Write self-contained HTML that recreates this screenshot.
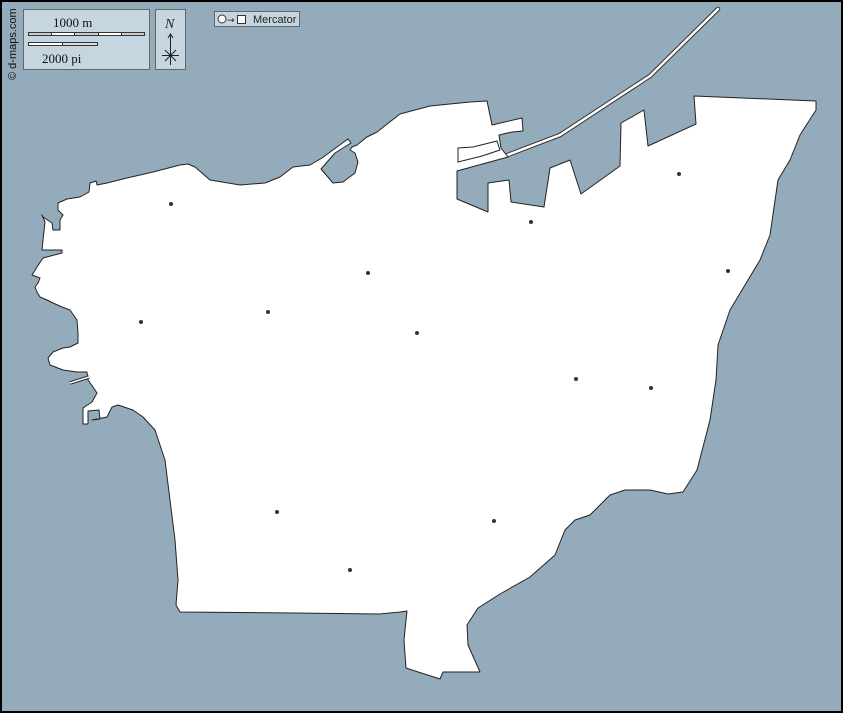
<!DOCTYPE html>
<html><head><meta charset="utf-8"><style>
html,body{margin:0;padding:0;background:#93abbb;}
svg{display:block}
</style></head><body>
<svg width="843" height="713" viewBox="0 0 843 713" xmlns="http://www.w3.org/2000/svg">
<rect x="0" y="0" width="843" height="713" fill="#93abbb"/>
<polyline points="505,156 560,135 650,76 718,9" fill="none" stroke="#333" stroke-width="4.5" stroke-linecap="round" stroke-linejoin="round"/>
<polyline points="505,156 560,135 650,76 718,9" fill="none" stroke="#fff" stroke-width="2.5" stroke-linecap="round" stroke-linejoin="round"/>
<path fill="#fff" stroke="#222" stroke-width="1" stroke-linejoin="round" d="
M188,164 L180,165 L153,172 L127,178 L107,183 L97,185 L96,181 L90,183 L89,192 L80,197 L67,199 L58,203 L58,210 L63,215 L60,220 L60,230 L53,230 L52,223 L43,217 L42,215 L45,222 L43,240 L42,250 L62,250 L62,253 L43,258 L37,267 L32,275 L40,278 L38,283 L35,287 L37,292 L40,297 L47,300 L53,303 L62,307 L70,310 L77,320 L78,333 L78,343 L70,347 L63,348 L53,352 L48,358 L50,365 L63,370 L77,372 L87,372 L88,380 L93,387 L97,393 L92,402 L83,408 L83,424 L88,424 L88,411 L99,410 L100,419 L92,420 L107,417 L112,407 L118,405 L133,410 L143,417 L155,430 L165,460 L170,500 L175,540 L178,580 L176,605 L180,612 L295,613 L380,614 L400,612 L407,611 L404,640 L406,668 L412,670 L440,679 L443,672 L480,672 L468,645 L467,625 L478,608 L500,594 L530,577 L555,555 L565,530 L575,520 L590,515 L610,495 L625,490 L650,490 L668,494 L683,492 L697,470 L710,420 L716,380 L718,345 L730,310 L745,285 L760,260 L770,235 L778,180 L790,160 L800,135 L816,110 L816,101 L694,96 L696,124 L648,146 L644,110 L621,123 L620,166 L581,194 L570,160 L550,168 L544,207 L511,202 L509,180 L488,183 L488,212 L457,199 L457,171 L508,157 L501,148 L499,135 L512,132 L523,131 L522,118 L492,125 L487,101 L470,102 L430,106 L400,114 L377,132 L367,137 L357,145 L352,147 L350,150 L355,153 L358,162 L355,173 L343,182 L333,183 L321,169 L335,153 L343,148 L351,143 L348,139 L337,147 L322,158 L310,165 L293,167 L280,177 L265,183 L240,185 L210,180 L195,167 Z"/>
<path fill="#fff" stroke="#222" stroke-width="1" d="M458,148 L473,147 L497,141 L500,150 L482,156 L458,162 Z"/>
<polyline points="70,383 89,377" fill="none" stroke="#222" stroke-width="3.5"/>
<polyline points="70,383 89,377" fill="none" stroke="#fff" stroke-width="1.5"/>
<g fill="#333">
<circle cx="171" cy="204" r="2"/><circle cx="368" cy="273" r="2"/><circle cx="531" cy="222" r="2"/><circle cx="679" cy="174" r="2"/><circle cx="728" cy="271" r="2"/><circle cx="141" cy="322" r="2"/><circle cx="268" cy="312" r="2"/><circle cx="417" cy="333" r="2"/><circle cx="576" cy="379" r="2"/><circle cx="651" cy="388" r="2"/><circle cx="277" cy="512" r="2"/><circle cx="494" cy="521" r="2"/><circle cx="350" cy="570" r="2"/>
</g>
<rect x="23.5" y="9.5" width="126" height="60" fill="#c6d6e0" stroke="#666"/>
<text x="53" y="27" font-family="Liberation Serif,serif" font-size="13" fill="#111">1000 m</text>
<rect x="28.5" y="32.5" width="116" height="3" fill="#fff" stroke="#333"/>
<g stroke="#333" stroke-width="1"><line x1="51.5" y1="32" x2="51.5" y2="36"/><line x1="74.5" y1="32" x2="74.5" y2="36"/><line x1="98.5" y1="32" x2="98.5" y2="36"/><line x1="121.5" y1="32" x2="121.5" y2="36"/></g>
<rect x="29" y="33" width="22" height="2" fill="#ccc"/><rect x="75" y="33" width="23" height="2" fill="#ccc"/><rect x="122" y="33" width="22" height="2" fill="#ccc"/>
<rect x="28.5" y="42.5" width="69" height="3" fill="#ddd" stroke="#333"/>
<rect x="29" y="43" width="33" height="2" fill="#fff"/>
<line x1="62.5" y1="42" x2="62.5" y2="46" stroke="#333"/>
<text x="42" y="63" font-family="Liberation Serif,serif" font-size="13" fill="#111">2000 pi</text>
<rect x="155.5" y="9.5" width="30" height="60" fill="#c6d6e0" stroke="#666"/>
<text x="165" y="28" font-family="Liberation Serif,serif" font-style="italic" font-size="14" fill="#222">N</text>
<line x1="170.5" y1="34" x2="170.5" y2="65" stroke="#222"/>
<polyline points="168,38 170.5,34 173,38" fill="none" stroke="#222"/>
<line x1="162" y1="55.5" x2="179" y2="55.5" stroke="#222"/>
<line x1="165" y1="50" x2="176" y2="61" stroke="#222"/><line x1="176" y1="50" x2="165" y2="61" stroke="#222"/>
<rect x="214.5" y="11.5" width="85" height="15" fill="#c6d6e0" stroke="#666"/>
<circle cx="222" cy="19" r="4" fill="#fff" stroke="#333"/>
<text x="227" y="23" font-family="DejaVu Sans,sans-serif" font-size="9" fill="#222">→</text>
<rect x="237.5" y="15.5" width="8" height="8" fill="#fff" stroke="#333"/>
<text x="253" y="23" font-family="Liberation Sans,sans-serif" font-size="11" fill="#222">Mercator</text>
<text transform="translate(16,80) rotate(-90)" font-family="Liberation Sans,sans-serif" font-size="11" fill="#111">© d-maps.com</text>
<rect x="1" y="1" width="841" height="711" fill="none" stroke="#000" stroke-width="2"/>
</svg>
</body></html>
